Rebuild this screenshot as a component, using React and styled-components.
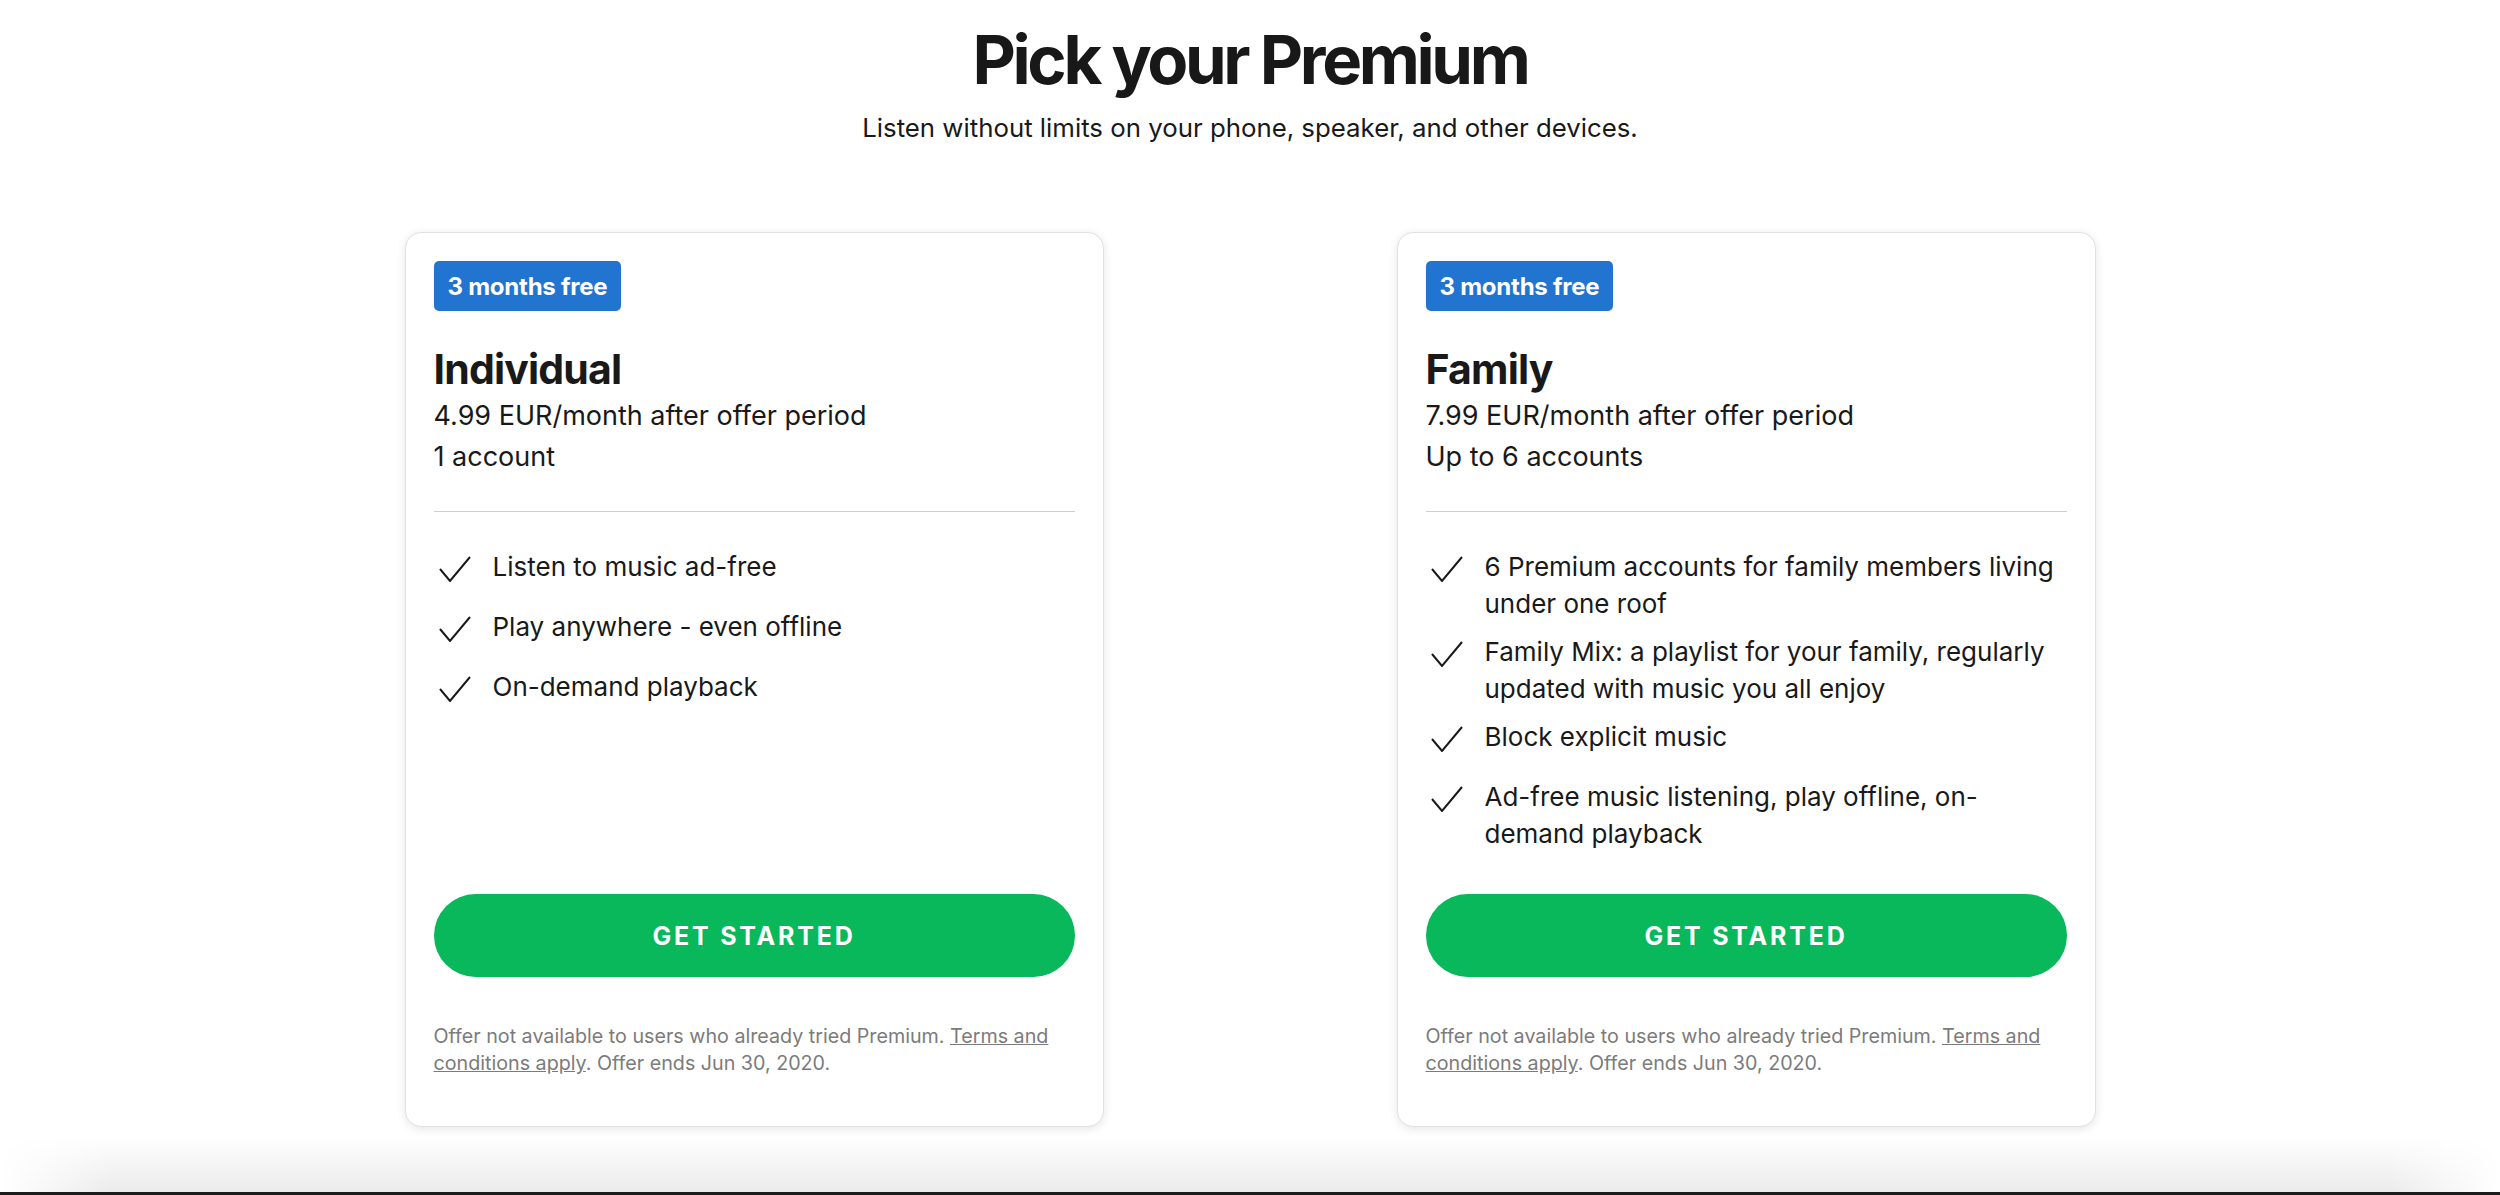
import React from "react";
import styled, { createGlobalStyle } from "styled-components";

const GlobalStyle = createGlobalStyle`
  html, body {
    margin: 0;
    padding: 0;
    background: #fff;
    height: 1195px;
    overflow: hidden;
  }
  body {
    font-family: Inter, "Noto Sans", sans-serif;
    color: #191919;
    -webkit-font-smoothing: antialiased;
  }
  * { box-sizing: border-box; }
`;

const Page = styled.main`
  display: flex;
  flex-direction: column;
  align-items: center;
  padding-top: 18px;
`;

const Title = styled.h1`
  margin: 0;
  font-size: 67px;
  line-height: 84px;
  font-weight: 700;
  letter-spacing: -0.05em;
  color: #181818;
`;

const Subtitle = styled.p`
  margin: 6px 0 0;
  font-size: 25.8px;
  line-height: 40px;
  color: #191919;
`;

const Plans = styled.section`
  display: grid;
  grid-template-columns: 699px 699px;
  column-gap: 293px;
  justify-content: center;
  margin-top: 84px;
  width: 100%;
`;

const Card = styled.article`
  display: flex;
  flex-direction: column;
  height: 895px;
  padding: 28px 28px 0;
  background: #fff;
  border: 1px solid #e1e1e1;
  border-radius: 16px;
  box-shadow: 0 2px 10px rgba(0, 0, 0, 0.1);
`;

const Badge = styled.span`
  align-self: flex-start;
  height: 50px;
  padding: 0 14px;
  display: flex;
  align-items: center;
  background: #2175d0;
  color: #fff;
  border-radius: 5px;
  font-size: 24px;
  font-weight: 700;
  letter-spacing: -0.01em;
`;

const PlanName = styled.h2`
  margin: 32px 0 0;
  font-size: 41px;
  line-height: 52px;
  font-weight: 700;
  letter-spacing: -0.02em;
`;

const Line = styled.p`
  margin: 0;
  font-size: 27px;
  line-height: 41px;
`;

const Divider = styled.hr`
  margin: 34px 0 0;
  border: 0;
  border-top: 1px solid #cfcfcf;
`;

const Features = styled.ul`
  list-style: none;
  margin: 36px 0 0;
  padding: 0;
  display: flex;
  flex-direction: column;
  gap: 11px;
  flex: 1;
`;

const Feature = styled.li`
  display: flex;
  align-items: flex-start;
  gap: 17px;
  min-height: 49px;
  font-size: 26px;
  line-height: 37px;
`;

const CheckBox = styled.span`
  flex: 0 0 42px;
  display: flex;
  justify-content: center;
  padding-top: 8px;
`;

const Button = styled.button`
  height: 83px;
  margin-top: 38px;
  border: 0;
  border-radius: 500px;
  background: #08b85a;
  color: #fff;
  font-family: Inter, sans-serif;
  font-size: 25px;
  font-weight: 700;
  letter-spacing: 2.8px;
  text-transform: uppercase;
  cursor: pointer;
`;

const Fine = styled.p`
  margin: 46px 0 49px;
  font-size: 19.7px;
  line-height: 27px;
  color: #7b7b7b;

  a {
    color: inherit;
    text-decoration: underline;
  }
`;

const Shade = styled.div`
  width: 100%;
  height: 55px;
  margin-top: 10px;
  background: linear-gradient(to bottom, rgba(0, 0, 0, 0), rgba(0, 0, 0, 0.08));
  -webkit-mask-image: linear-gradient(to right, transparent, #000 110px, #000 calc(100% - 110px), transparent);
  mask-image: linear-gradient(to right, transparent, #000 110px, #000 calc(100% - 110px), transparent);
`;

const Bar = styled.div`
  width: 100%;
  height: 6px;
  background: #1c1c1c;
`;

const Check = () => (
  <svg width="32" height="26" viewBox="0 0 32 26" fill="none">
    <path d="M1 13L11 25L31 1" stroke="#1a1a1a" strokeWidth="2" />
  </svg>
);

const plans = [
  {
    name: "Individual",
    price: "4.99 EUR/month after offer period",
    accounts: "1 account",
    features: ["Listen to music ad-free", "Play anywhere - even offline", "On-demand playback"],
  },
  {
    name: "Family",
    price: "7.99 EUR/month after offer period",
    accounts: "Up to 6 accounts",
    features: [
      "6 Premium accounts for family members living under one roof",
      "Family Mix: a playlist for your family, regularly updated with music you all enjoy",
      "Block explicit music",
      "Ad-free music listening, play offline, on-demand playback",
    ],
  },
];

const App = () => {
  return (
    <>
      <GlobalStyle />
      <Page>
        <Title>Pick your Premium</Title>
        <Subtitle>Listen without limits on your phone, speaker, and other devices.</Subtitle>
        <Plans>
          {plans.map((plan) => (
            <Card key={plan.name}>
              <Badge>3 months free</Badge>
              <PlanName>{plan.name}</PlanName>
              <Line>{plan.price}</Line>
              <Line>{plan.accounts}</Line>
              <Divider />
              <Features>
                {plan.features.map((f) => (
                  <Feature key={f}>
                    <CheckBox>
                      <Check />
                    </CheckBox>
                    <span>{f}</span>
                  </Feature>
                ))}
              </Features>
              <Button>Get started</Button>
              <Fine>
                Offer not available to users who already tried Premium.{" "}
                <a href="#terms">Terms and</a> <a href="#terms">conditions apply</a>. Offer ends Jun 30, 2020.
              </Fine>
            </Card>
          ))}
        </Plans>
        <Shade />
        <Bar />
      </Page>
    </>
  );
};

export default App;
